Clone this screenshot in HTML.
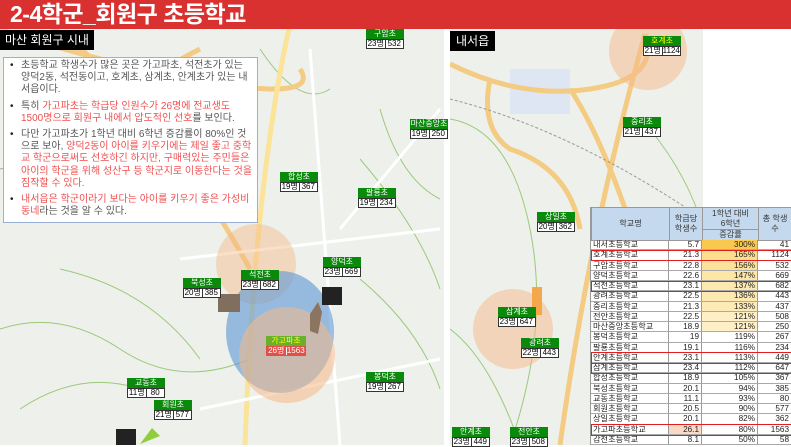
<!DOCTYPE html>
<html><head><meta charset="utf-8"><style>
*{margin:0;padding:0;box-sizing:border-box}
body{width:791px;height:445px;overflow:hidden;background:#fff;position:relative;font-family:"Liberation Sans","Noto Sans CJK KR",sans-serif}
.hdr{position:absolute;left:0;top:0;width:791px;height:29px;background:#d93030;color:#fff;font-size:23px;font-weight:bold;padding-left:10px;line-height:29px;letter-spacing:-0.5px}
.map{position:absolute;background:#eef0ec;overflow:hidden}
.tag{position:absolute;background:#000;color:#fff;font-size:12px;line-height:20px;padding:0 5px}
.lb{position:absolute;width:38px;font-size:8px;text-align:center;line-height:9px;white-space:nowrap}
.lb .t{background:#0a8a0a;color:#fff;height:10px;line-height:10px}
.lb .n{display:flex;border:1px solid #333;background:#fff;height:10px}
.lb .n span{flex:1;border-right:1px solid #333;line-height:8px;font-size:8px}
.lb .n span:last-child{border-right:none}
.box{position:absolute;left:3px;top:57px;width:255px;height:166px;background:#fff;border:1px solid #9ab0d8;padding:2px 4px 0 6px;font-size:10px;line-height:12.2px;color:#555;letter-spacing:0}
.box p{position:relative;padding-left:11px;margin-bottom:4px}
.box p:before{content:"•";position:absolute;left:0;color:#222}
.r{color:#f05050}
.tb{position:absolute;left:590px;top:207px;width:201px;height:238px;background:#fff;font-size:8.2px;color:#222;border-left:1px solid #999}
.hd{position:absolute;background:#c5d9ee;border:1px solid #999;color:#333;text-align:center;font-size:8.2px;line-height:10px;display:flex;align-items:center;justify-content:center}
.row{position:absolute;left:0;width:201px;height:10.25px;display:flex;border-bottom:1px solid #aaa;line-height:9.5px}
.row div{border-right:1px solid #999;padding:0 2px;white-space:nowrap;overflow:hidden}
.row div:nth-child(1){width:78px}
.row div:nth-child(2){width:33px;text-align:right}
.row div:nth-child(3){width:56px;text-align:right}
.row div:nth-child(4){width:34px;text-align:right}
.hlb{position:absolute;left:0;width:201px;height:11.5px;border:1.5px solid #e02020}
</style></head><body>
<div class="map" style="left:0;top:29px;width:444px;height:416px">
<svg width="444" height="416" style="position:absolute;left:0;top:0">
<g fill="none" stroke="#9cc97a" stroke-width="1">
<path d="M0 300 Q60 280 120 320 T250 330"/><path d="M20 380 Q80 340 140 360"/><path d="M380 80 Q400 150 440 170"/><path d="M360 130 Q420 200 440 260"/><path d="M60 240 Q150 260 200 330"/><path d="M130 40 Q150 120 190 140"/><path d="M260 20 Q300 80 330 60"/><path d="M360 250 Q420 300 440 360"/>
</g>
<g fill="none" stroke="#f4cb82" stroke-width="5">
<path d="M0 0 Q120 40 220 55 T300 40"/><path d="M40 -10 Q150 60 250 240"/><path d="M140 60 Q160 40 200 20"/>
</g>
<path d="M290 -5 Q255 150 245 416" stroke="#fbe39a" stroke-width="5" fill="none"/>
<g fill="none" stroke="#fff" stroke-width="3">
<path d="M310 20 L340 416"/><path d="M180 230 L440 200"/><path d="M200 380 L440 330"/><path d="M340 200 L440 80"/>
</g>
<path d="M0 140 Q100 120 150 160" stroke="#aaa" stroke-dasharray="3 2" fill="none"/>
<circle cx="256" cy="235" r="40" fill="#f5b887" opacity=".45"/>
<ellipse cx="280" cy="303" rx="54" ry="61" fill="#5b96d6" opacity=".6"/>
<circle cx="287" cy="326" r="48" fill="#f5b887" opacity=".55"/>
<path d="M310 285 l8 -12 4 10 -4 22 -8 -3z" fill="#8b7560"/>
<rect x="218" y="265" width="22" height="18" fill="#806f5e"/>
<rect x="322" y="258" width="20" height="18" fill="#222"/>
<rect x="116" y="400" width="20" height="16" fill="#222"/>
<path d="M140 415 l12 -16 8 8z" fill="#8fce3b"/>
</svg>
<div class="tag" style="left:0;top:1px">마산 회원구 시내</div>
</div>
<div class="map" style="left:450px;top:29px;width:253px;height:416px">
<svg width="253" height="416" style="position:absolute;left:0;top:0">
<rect x="60" y="40" width="60" height="45" fill="#dde6f2"/>
<g fill="none" stroke="#9cc97a"><path d="M0 90 Q60 100 80 200 T60 416"/><path d="M200 100 Q240 150 253 200"/><path d="M0 300 Q40 330 70 416"/></g>
<g fill="none" stroke="#f4cb82" stroke-width="5">
<path d="M0 35 Q70 70 140 60 T195 5"/><path d="M120 60 Q180 150 240 416"/><path d="M195 5 Q140 200 110 416"/><path d="M40 50 Q30 100 60 120 Q120 140 130 200"/>
</g>
<path d="M0 70 Q120 100 253 190" stroke="#999" stroke-dasharray="3 2" fill="none"/>
<circle cx="198" cy="22" r="39" fill="#f5b887" opacity=".5"/>
<circle cx="63" cy="300" r="40" fill="#f5b887" opacity=".5"/>
<rect x="82" y="258" width="10" height="28" fill="#f4a84c"/>
</svg>
<div class="tag" style="left:0;top:2px;padding:0 6px">내서읍</div>
</div>
<div class="hdr">2-4학군_회원구 초등학교</div>
<div class="box">
<p>초등학교 학생수가 많은 곳은 가고파초, 석전초가 있는 양덕2동, 석전동이고, 호계초, 삼계초, 안계초가 있는 내서읍이다.</p>
<p>특히 <span class="r">가고파초는 학급당 인원수가 26명에 전교생도 1500명으로 회원구 내에서 압도적인 선호</span>를 보인다.</p>
<p>다만 가고파초가 1학년 대비 6학년 증감률이 80%인 것으로 보아, <span class="r">양덕2동이 아이를 키우기에는 제일 좋고 중학교 학군으로써도 선호하긴 하지만, 구매력있는 주민들은 아이의 학군을 위해 성산구 등 학군지로 이동한다는 것을 짐작할 수 있다.</span></p>
<p class="r"><span>내서읍은 학군이라기 보다는 아이를 키우기 좋은 가성비 동네</span><span style="color:#555">라는 것을 알 수 있다.</span></p>
</div>
<div class="lb" style="left:366px;top:29px"><div class="t">구암초</div><div class="n"><span>23명</span><span>532</span></div></div>
<div class="lb" style="left:410px;top:119px"><div class="t">마산중앙초</div><div class="n"><span>19명</span><span>250</span></div></div>
<div class="lb" style="left:280px;top:172px"><div class="t">합성초</div><div class="n"><span>19명</span><span>367</span></div></div>
<div class="lb" style="left:358px;top:188px"><div class="t">팔룡초</div><div class="n"><span>19명</span><span>234</span></div></div>
<div class="lb" style="left:323px;top:257px"><div class="t">양덕초</div><div class="n"><span>23명</span><span>669</span></div></div>
<div class="lb" style="left:241px;top:270px"><div class="t">석전초</div><div class="n"><span>23명</span><span>682</span></div></div>
<div class="lb" style="left:183px;top:278px"><div class="t">북성초</div><div class="n"><span>20명</span><span>385</span></div></div>
<div class="lb" style="left:266px;top:336px;width:40px"><div class="t" style="background:#6bb02a;color:#ff0">가고파초</div><div class="n" style="background:#e05048;color:#fff;border-color:#e05048"><span style="border-color:#fff">26명</span><span>1563</span></div></div>
<div class="lb" style="left:366px;top:372px"><div class="t">봉덕초</div><div class="n"><span>19명</span><span>267</span></div></div>
<div class="lb" style="left:127px;top:378px"><div class="t">교동초</div><div class="n"><span>11명</span><span>80</span></div></div>
<div class="lb" style="left:154px;top:400px"><div class="t">회원초</div><div class="n"><span>21명</span><span>577</span></div></div>
<div class="lb" style="left:643px;top:36px"><div class="t" style="color:#ff0">호계초</div><div class="n"><span>21명</span><span>1124</span></div></div>
<div class="lb" style="left:623px;top:117px"><div class="t">중리초</div><div class="n"><span>21명</span><span>437</span></div></div>
<div class="lb" style="left:537px;top:212px"><div class="t">상일초</div><div class="n"><span>20명</span><span>362</span></div></div>
<div class="lb" style="left:498px;top:307px"><div class="t">삼계초</div><div class="n"><span>23명</span><span>647</span></div></div>
<div class="lb" style="left:521px;top:338px"><div class="t">광려초</div><div class="n"><span>22명</span><span>443</span></div></div>
<div class="lb" style="left:452px;top:427px"><div class="t">안계초</div><div class="n"><span>23명</span><span>449</span></div></div>
<div class="lb" style="left:510px;top:427px"><div class="t">전안초</div><div class="n"><span>23명</span><span>508</span></div></div>
<div class="tb">
<div class="hd" style="left:0;top:0;width:79px;height:34px">학교명</div>
<div class="hd" style="left:78px;top:0;width:34px;height:34px">학급당<br>학생수</div>
<div class="hd" style="left:111px;top:0;width:57px;height:23px">1학년 대비<br>6학년</div>
<div class="hd" style="left:111px;top:22px;width:57px;height:12px">증감률</div>
<div class="hd" style="left:167px;top:0;width:34px;height:34px">총 학생<br>수</div>
<div class="row" style="top:33px"><div>내서초등학교</div><div>5.7</div><div style="background:#f9c84f">300%</div><div>41</div></div>
<div class="row" style="top:43.25px"><div>호계초등학교</div><div>21.3</div><div style="background:#fcdf8c">165%</div><div>1124</div></div>
<div class="row" style="top:53.5px"><div>구암초등학교</div><div>22.8</div><div style="background:#fce299">156%</div><div>532</div></div>
<div class="row" style="top:63.75px"><div>양덕초등학교</div><div>22.6</div><div style="background:#fde6a6">147%</div><div>669</div></div>
<div class="row" style="top:74px"><div>석전초등학교</div><div>23.1</div><div style="background:#fde9b0">137%</div><div>682</div></div>
<div class="row" style="top:84.25px"><div>광려초등학교</div><div>22.5</div><div style="background:#fde9b1">136%</div><div>443</div></div>
<div class="row" style="top:94.5px"><div>중리초등학교</div><div>21.3</div><div style="background:#fdeab4">133%</div><div>437</div></div>
<div class="row" style="top:104.75px"><div>전안초등학교</div><div>22.5</div><div style="background:#feefc6">121%</div><div>508</div></div>
<div class="row" style="top:115px"><div>마산중앙초등학교</div><div>18.9</div><div style="background:#feefc6">121%</div><div>250</div></div>
<div class="row" style="top:125.25px"><div>봉덕초등학교</div><div>19</div><div>119%</div><div>267</div></div>
<div class="row" style="top:135.5px"><div>팔룡초등학교</div><div>19.1</div><div>116%</div><div>234</div></div>
<div class="row" style="top:145.75px"><div>안계초등학교</div><div>23.1</div><div>113%</div><div>449</div></div>
<div class="row" style="top:156px"><div>삼계초등학교</div><div>23.4</div><div>112%</div><div>647</div></div>
<div class="row" style="top:166.25px"><div>합성초등학교</div><div>18.9</div><div>105%</div><div>367</div></div>
<div class="row" style="top:176.5px"><div>북성초등학교</div><div>20.1</div><div>94%</div><div>385</div></div>
<div class="row" style="top:186.75px"><div>교동초등학교</div><div>11.1</div><div>93%</div><div>80</div></div>
<div class="row" style="top:197px"><div>회원초등학교</div><div>20.5</div><div>90%</div><div>577</div></div>
<div class="row" style="top:207.25px"><div>상일초등학교</div><div>20.1</div><div>82%</div><div>362</div></div>
<div class="row" style="top:217.5px"><div>가고파초등학교</div><div style="background:#fbd9c4">26.1</div><div>80%</div><div>1563</div></div>
<div class="row" style="top:227.75px"><div>감천초등학교</div><div>8.1</div><div>50%</div><div>58</div></div>
<div class="hlb" style="top:42.5px"></div>
<div class="hlb" style="top:73.5px"></div>
<div class="hlb" style="top:145px"></div>
<div class="hlb" style="top:155.5px"></div>
<div class="hlb" style="top:217px"></div>
</div>
</body></html>
